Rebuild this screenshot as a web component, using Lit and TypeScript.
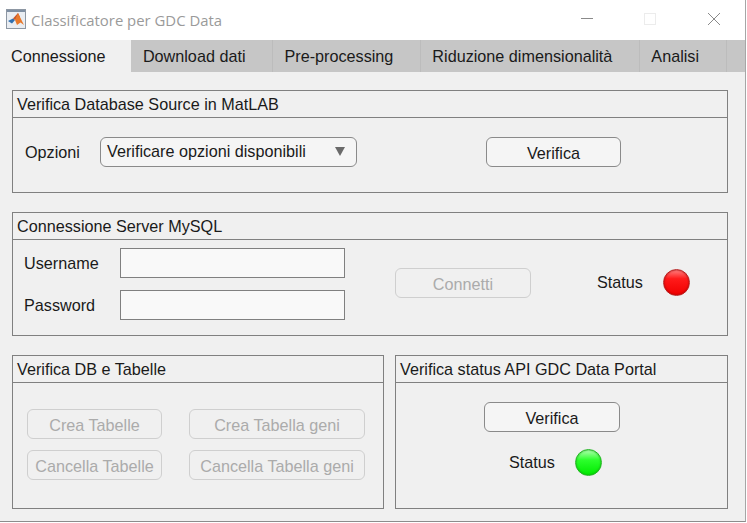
import { LitElement, html, css } from 'lit';
import { customElement } from 'lit/decorators.js';

const TABS = ['Connessione', 'Download dati', 'Pre-processing', 'Riduzione dimensionalità', 'Analisi'];

@customElement('app-root')
export class AppRoot extends LitElement {
  static styles = css`
    :host {
      display: block;
      width: 747px;
      height: 523px;
      background: #fff;
      font-family: 'Liberation Sans', Arial, sans-serif;
      font-size: 16.2px;
      color: #1a1a1a;
      overflow: hidden;
    }

    .window {
      width: 746px;
      height: 522px;
      display: flex;
      flex-direction: column;
      background: #f0f0f0;
      border-right: 1px solid #a6a6a6;
      border-bottom: 1px solid #8c8c8c;
      box-sizing: border-box;
    }

    /* title bar */
    .titlebar {
      height: 40px;
      flex: none;
      display: flex;
      align-items: center;
      background: #fff;
      padding-left: 6px;
    }
    .logo {
      width: 20px;
      height: 20px;
      margin: -2px 5px 0 0;
    }
    .title {
      font-family: 'Open Sans', 'Noto Sans', sans-serif;
      font-size: 14.9px;
      color: #9a9a9a;
    }
    .controls {
      margin: -2px 0 0 auto;
      display: flex;
      align-items: center;
      padding-right: 25px;
    }
    .controls svg {
      display: block;
      width: 12px;
      height: 12px;
    }
    .controls .max {
      margin-left: 51px;
    }
    .controls .close {
      margin-left: 52px;
    }

    /* tabs */
    .tabs {
      height: 32px;
      flex: none;
      display: flex;
      background: #c6c6c6;
    }
    .tab {
      padding: 0 27px 0 11px;
      line-height: 32px;
      border-right: 1px solid #bcbcbc;
      box-sizing: border-box;
      white-space: nowrap;
    }
    .tab.active {
      background: #f0f0f0;
      padding: 0 25.4px 0 11px;
      border-right: none;
    }
    .tab.active + .tab {
      padding-left: 12px;
    }

    .content {
      flex: 1;
      display: flex;
      flex-direction: column;
      gap: 19px;
      padding: 18px 17px 0 12px;
    }
    .row {
      display: flex;
      gap: 11px;
    }

    /* panels */
    .panel {
      border: 1px solid #808080;
      box-sizing: border-box;
    }
    .panel-title {
      height: 27px;
      line-height: 26px;
      padding-left: 4px;
      border-bottom: 1px solid #808080;
      box-sizing: border-box;
      white-space: nowrap;
    }
    .source { height: 103px; }
    .server { height: 124px; }
    .db { width: 372px; height: 154px; }
    .api { width: 333px; height: 154px; }

    .source-body {
      display: flex;
      align-items: center;
      padding: 19px 0 0 12px;
    }
    .source-body .label {
      width: 75px;
    }
    .source-body .verify {
      margin-left: 129px;
      width: 135px;
    }

    .server-body {
      display: flex;
      align-items: center;
      padding: 8px 0 0 11px;
    }
    .credentials {
      display: grid;
      grid-template-columns: 96px 225px;
      grid-auto-rows: 30px;
      row-gap: 12px;
      align-items: center;
    }
    .connect {
      width: 136px;
      margin: -2px 0 0 50px;
    }
    .server-body .status {
      margin: -4px 0 0 66px;
    }

    .db-body {
      display: grid;
      grid-template-columns: 135px 176px;
      grid-auto-rows: 30px;
      gap: 11px 27px;
      padding: 26px 0 0 14px;
    }

    .api-body {
      display: flex;
      flex-direction: column;
      align-items: flex-start;
      padding: 19px 0 0 88px;
      gap: 17px;
    }
    .api-body .verify {
      width: 136px;
    }
    .api-body .status {
      margin-left: 25px;
    }

    /* controls */
    .btn {
      height: 30px;
      padding: 2px 0 0;
      border: 1px solid #8a8a8a;
      border-radius: 6px;
      background: #f5f5f5;
      font: inherit;
      color: #1a1a1a;
      white-space: nowrap;
    }
    .btn:disabled {
      border-color: #cfcfcf;
      background: #f0f0f0;
      color: #ababab;
    }
    .dropdown {
      width: 257px;
      height: 30px;
      display: flex;
      align-items: center;
      justify-content: space-between;
      padding: 0 11px 2px 6px;
      border: 1px solid #8a8a8a;
      border-radius: 6px;
      background: #f5f5f5;
      box-sizing: border-box;
    }
    .dropdown svg {
      width: 10px;
      height: 9px;
    }
    .field {
      height: 30px;
      width: 225px;
      padding: 0;
      border: 1px solid #808080;
      background: #f9f9f9;
      box-sizing: border-box;
    }
    .status {
      display: flex;
      align-items: center;
      gap: 20px;
    }
    .lamp {
      width: 27px;
      height: 27px;
      border-radius: 50%;
      box-sizing: border-box;
    }
    .lamp.red {
      background: linear-gradient(#ff8080 0%, #ff1a1a 35%, #f00000 100%);
      border: 1px solid #b82020;
      box-shadow: inset 0 0 2px #a00000;
    }
    .lamp.green {
      background: linear-gradient(#b0ffb0 0%, #2cff2c 40%, #00ea00 100%);
      border: 1px solid #22b522;
      box-shadow: inset 0 0 2px #10a010;
    }
  `;

  renderLogo() {
    return html`
      <svg class="logo" viewBox="0 0 20 20">
        <rect x="0.5" y="0.5" width="19" height="19" fill="#e9edf2" stroke="#8d97a3" />
        <rect x="1" y="1" width="18" height="2" fill="#7e8fa3" />
        <path d="M2 12 L7 9.5 L9 11 L6 14.5 Z" fill="#2f6fb0" />
        <path d="M7 9.5 L12 4 L14 8 L9 11 Z" fill="#c8562a" />
        <path d="M12 4 L18 16 L14.5 13.5 L11 16 L9 11 Z" fill="#e8792c" />
      </svg>
    `;
  }

  renderStatus(color: string) {
    return html`
      <div class="status">
        <span>Status</span>
        <div class="lamp ${color}"></div>
      </div>
    `;
  }

  render() {
    return html`
      <div class="window">
        <div class="titlebar">
          ${this.renderLogo()}
          <span class="title">Classificatore per GDC Data</span>
          <div class="controls">
            <svg viewBox="0 0 12 12"><path d="M0 5.5H12" stroke="#8a8a8a" /></svg>
            <svg class="max" viewBox="0 0 12 12"><rect x="0.5" y="0.5" width="11" height="11" fill="none" stroke="#ececec" /></svg>
            <svg class="close" viewBox="0 0 12 12"><path d="M0 0L12 12M12 0L0 12" stroke="#8a8a8a" /></svg>
          </div>
        </div>

        <div class="tabs">
          ${TABS.map((t, i) => html`<div class="tab ${i === 0 ? 'active' : ''}">${t}</div>`)}
        </div>

        <div class="content">
          <section class="panel source">
            <div class="panel-title">Verifica Database Source in MatLAB</div>
            <div class="source-body">
              <span class="label">Opzioni</span>
              <div class="dropdown">
                <span>Verificare opzioni disponibili</span>
                <svg viewBox="0 0 10 9"><polygon points="0,0 10,0 5,9" fill="#6a6a6a" /></svg>
              </div>
              <button class="btn verify">Verifica</button>
            </div>
          </section>

          <section class="panel server">
            <div class="panel-title">Connessione Server MySQL</div>
            <div class="server-body">
              <div class="credentials">
                <span class="label">Username</span>
                <input class="field" />
                <span class="label">Password</span>
                <input class="field" type="password" />
              </div>
              <button class="btn connect" disabled>Connetti</button>
              ${this.renderStatus('red')}
            </div>
          </section>

          <div class="row">
            <section class="panel db">
              <div class="panel-title">Verifica DB e Tabelle</div>
              <div class="db-body">
                <button class="btn" disabled>Crea Tabelle</button>
                <button class="btn" disabled>Crea Tabella geni</button>
                <button class="btn" disabled>Cancella Tabelle</button>
                <button class="btn" disabled>Cancella Tabella geni</button>
              </div>
            </section>
            <section class="panel api">
              <div class="panel-title">Verifica status API GDC Data Portal</div>
              <div class="api-body">
                <button class="btn verify">Verifica</button>
                ${this.renderStatus('green')}
              </div>
            </section>
          </div>
        </div>
      </div>
    `;
  }
}
